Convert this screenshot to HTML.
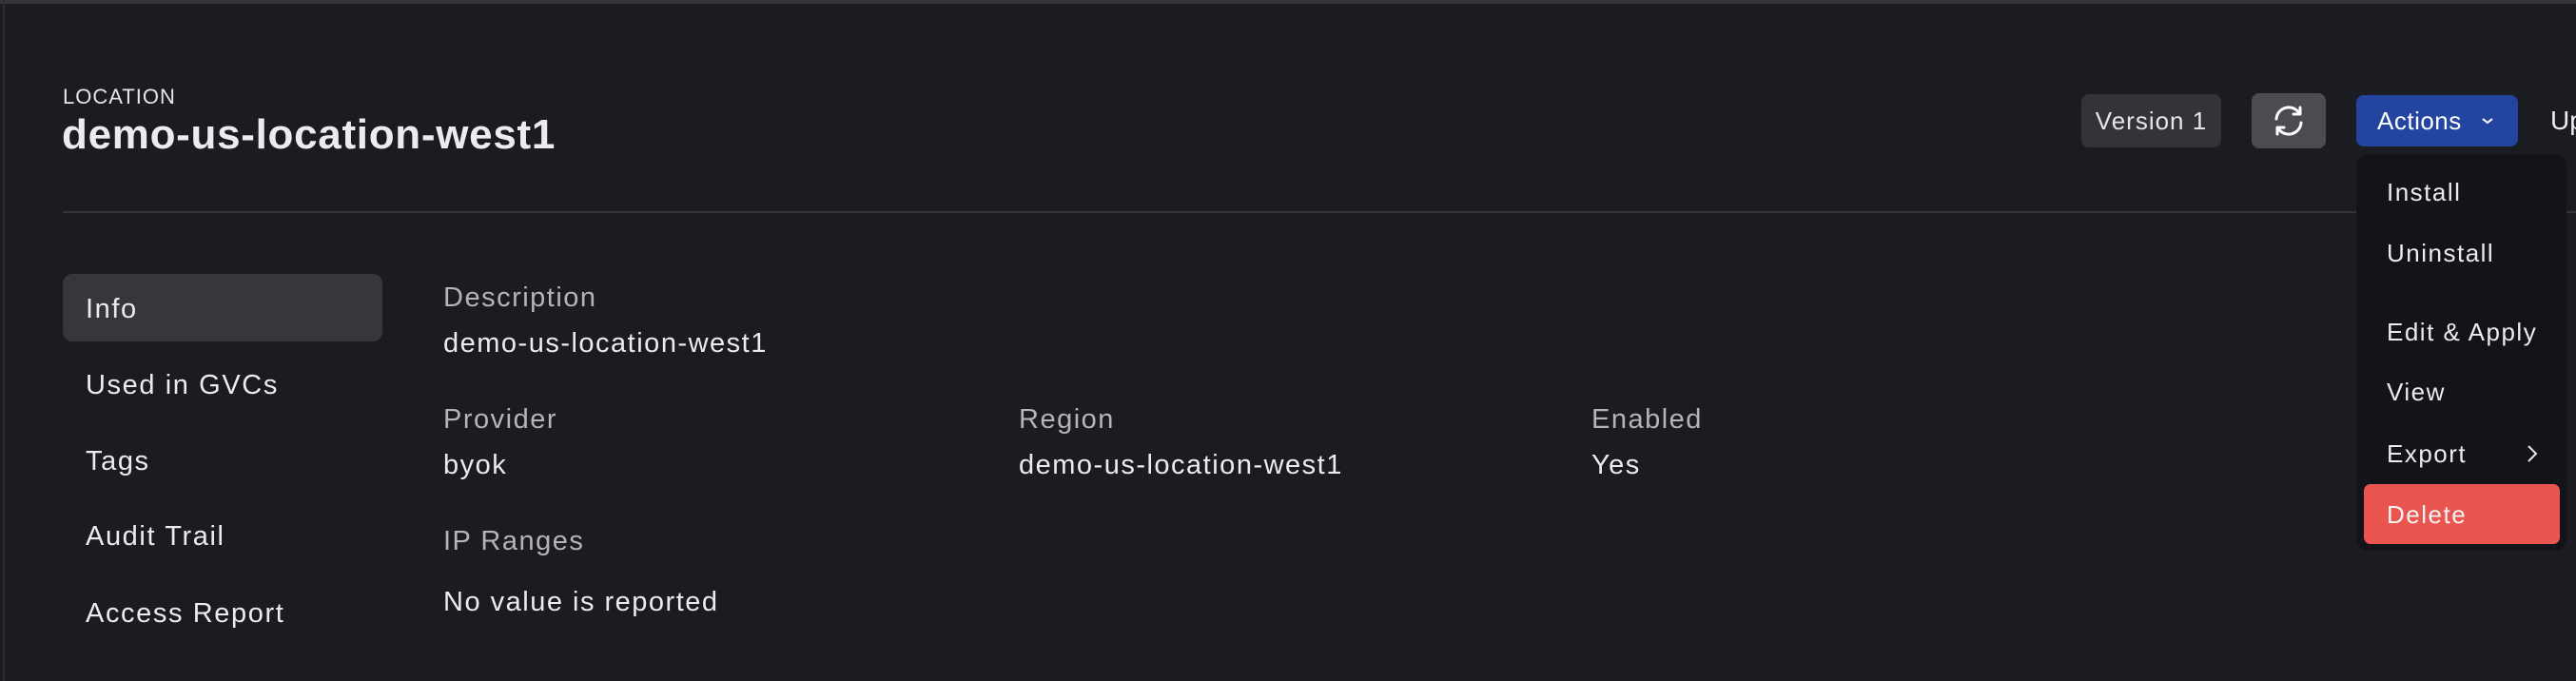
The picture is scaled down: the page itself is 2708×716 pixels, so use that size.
<!DOCTYPE html>
<html><head><meta charset="utf-8"><style>
*{margin:0;padding:0;box-sizing:border-box}
body{width:2708px;height:716px;background:#1a1c21;font-family:"Liberation Sans",sans-serif;overflow:hidden;position:relative;color:#ececee}
.a{position:absolute;white-space:nowrap}
.t{line-height:40px;height:40px}
.n{font-size:29px;letter-spacing:1.6px}
.c{font-size:29px;letter-spacing:1.5px}
.l{color:#b4b5b9}
.m{font-size:26px;letter-spacing:1.5px}
</style></head><body>
<div class="a" style="left:0;top:0;width:2708px;height:4px;background:#34363b"></div>
<div class="a" style="left:3px;top:0;width:2px;height:716px;background:#2c2e33"></div>

<div class="a t" style="left:66px;top:82px;font-size:22px;letter-spacing:1px;color:#e6e6e8">LOCATION</div>
<div class="a" style="left:65px;top:116px;line-height:52px;font-size:44px;font-weight:bold;color:#ececee;letter-spacing:0.7px">demo-us-location-west1</div>
<div class="a" style="left:66px;top:222px;width:2642px;height:2px;background:#32343a"></div>

<div class="a" style="left:66px;top:288px;width:336px;height:71px;background:#36373c;border-radius:10px"></div>
<div class="a t n" style="left:90px;top:305px">Info</div>
<div class="a t n" style="left:90px;top:385px">Used in GVCs</div>
<div class="a t n" style="left:90px;top:465px">Tags</div>
<div class="a t n" style="left:90px;top:544px">Audit Trail</div>
<div class="a t n" style="left:90px;top:625px">Access Report</div>

<div class="a t c l" style="left:466px;top:293px">Description</div>
<div class="a t c" style="left:466px;top:341px">demo-us-location-west1</div>
<div class="a t c l" style="left:466px;top:421px">Provider</div>
<div class="a t c" style="left:466px;top:469px">byok</div>
<div class="a t c l" style="left:1071px;top:421px">Region</div>
<div class="a t c" style="left:1071px;top:469px">demo-us-location-west1</div>
<div class="a t c l" style="left:1673px;top:421px">Enabled</div>
<div class="a t c" style="left:1673px;top:469px">Yes</div>
<div class="a t c l" style="left:466px;top:549px">IP Ranges</div>
<div class="a t c" style="left:466px;top:613px">No value is reported</div>

<div class="a" style="left:2188px;top:99px;width:147px;height:56px;background:#333438;border-radius:8px;font-size:26px;letter-spacing:1px;line-height:56px;text-align:center;color:#e6e6e8">Version 1</div>
<div class="a" style="left:2367px;top:98px;width:78px;height:58px;background:#4a4c51;border-radius:8px">
<svg width="78" height="58" viewBox="0 0 78 58"><g fill="none" stroke="#fff" stroke-width="3" stroke-linecap="round" stroke-linejoin="round">
<path d="M26 27a13 13 0 0 1 24-6"/><path d="M51 15v7h-7"/>
<path d="M52 31a13 13 0 0 1-24 6"/><path d="M27 43v-7h7"/></g></svg></div>
<div class="a" style="left:2477px;top:100px;width:170px;height:54px;background:#23459f;border-radius:8px;font-size:26px;letter-spacing:0.5px;line-height:54px;color:#fff;padding-left:22px">Actions
<svg style="position:absolute;left:131px;top:22px" width="14" height="10" viewBox="0 0 14 10"><path d="M2 3l5 4 5-4" fill="none" stroke="#fff" stroke-width="2"/></svg></div>
<div class="a" style="left:2681px;top:107px;font-size:28px;line-height:40px">Up</div>

<div class="a" style="left:2477px;top:162px;width:221px;height:417px;background:#121419;border-radius:12px"></div>
<div class="a t m" style="left:2509px;top:182px">Install</div>
<div class="a t m" style="left:2509px;top:246px">Uninstall</div>
<div class="a t m" style="left:2509px;top:329px">Edit &amp; Apply</div>
<div class="a t m" style="left:2509px;top:392px">View</div>
<div class="a t m" style="left:2509px;top:457px">Export</div>
<svg class="a" style="left:2654px;top:465px" width="16" height="24" viewBox="0 0 16 24"><path d="M4 4l8 8-8 8" fill="none" stroke="#e6e6e8" stroke-width="2"/></svg>
<div class="a" style="left:2485px;top:509px;width:206px;height:63px;background:#eb5550;border-radius:7px"></div>
<div class="a t m" style="left:2509px;top:521px;color:#f4f4f4">Delete</div>
</body></html>
